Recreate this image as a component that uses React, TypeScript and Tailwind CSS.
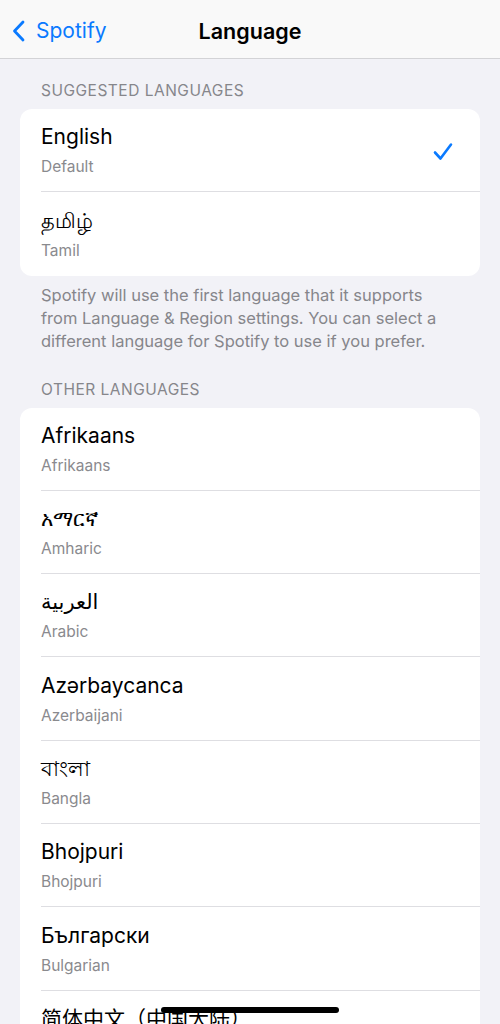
import React from "react";

const suggested = [
  { name: "English", sub: "Default", checked: true },
  { name: "தமிழ்", sub: "Tamil" },
];

const others = [
  { name: "Afrikaans", sub: "Afrikaans" },
  { name: "አማርኛ", sub: "Amharic" },
  { name: "العربية", sub: "Arabic" },
  { name: "Azərbaycanca", sub: "Azerbaijani" },
  { name: "বাংলা", sub: "Bangla" },
  { name: "Bhojpuri", sub: "Bhojpuri" },
  { name: "Български", sub: "Bulgarian" },
  { name: "简体中文（中国大陆）", sub: "Chinese, Simplified" },
];

function Row({ name, sub, checked, last }: { name: string; sub: string; checked?: boolean; last?: boolean }) {
  return (
    <div className="pl-[21px] flex">
      <div className={`flex-1 h-[83.3px] flex items-center pr-[26px] ${last ? "" : "border-b border-[#dedee2]"}`}>
        <div className="flex-1 flex flex-col pt-[1px]">
          <span className="text-[21px] leading-[26px] text-black">{name}</span>
          <span className="text-[15.5px] leading-[20px] mt-[7px] text-[#8a8a8e]">{sub}</span>
        </div>
        {checked && (
          <svg width="22" height="22" viewBox="0 0 22 22" className="mt-[4px]">
            <path d="M3 11.5 L8.5 17.5 L19 3.5" fill="none" stroke="#0a7aff" strokeWidth="2.6" strokeLinecap="round" strokeLinejoin="round" />
          </svg>
        )}
      </div>
    </div>
  );
}

export default function App() {
  return (
    <div
      className="relative w-[500px] h-[1024px] overflow-hidden bg-[#f2f2f7]"
      style={{ fontFamily: "Inter, 'Noto Sans', 'DejaVu Sans', 'Noto Sans CJK SC', sans-serif" }}
    >
      <div className="h-[59px] pt-[3px] bg-[#f9f9f9] border-b border-[#d3d3d6] flex items-center relative">
        <div className="flex items-center pl-[11px] text-[#0a7aff]">
          <svg width="16" height="24" viewBox="0 0 16 24">
            <path d="M12 3 L3.5 12 L12 21" fill="none" stroke="#0a7aff" strokeWidth="2.8" strokeLinecap="round" strokeLinejoin="round" />
          </svg>
          <span className="ml-[9px] text-[21px] leading-none">Spotify</span>
        </div>
        <div className="absolute inset-x-0 top-[3px] h-[56px] flex items-center justify-center pointer-events-none">
          <span className="text-[21.5px] font-semibold text-black">Language</span>
        </div>
      </div>

      <div className="px-[20px]">
        <div className="pl-[21px] pt-[22px] pb-[8px] text-[15.5px] leading-[20px] tracking-[0.5px] text-[#86868b] uppercase">Suggested Languages</div>
        <div className="bg-white rounded-[12px] overflow-hidden">
          {suggested.map((r, i) => (
            <Row key={r.sub} {...r} last={i === suggested.length - 1} />
          ))}
        </div>
        <div className="px-[21px] pt-[8px] text-[16.5px] leading-[23px] text-[#86868b]">
          Spotify will use the first language that it supports from Language &amp; Region settings. You can select a different language for Spotify to use if you prefer.
        </div>
        <div className="pl-[21px] pt-[27px] pb-[8px] text-[15.5px] leading-[20px] tracking-[0.5px] text-[#86868b] uppercase">Other Languages</div>
        <div className="bg-white rounded-[12px] overflow-hidden">
          {others.map((r) => (
            <Row key={r.sub} {...r} />
          ))}
        </div>
      </div>

      <div className="absolute left-[161px] top-[1007px] w-[178px] h-[6px] rounded-full bg-black" />
    </div>
  );
}
